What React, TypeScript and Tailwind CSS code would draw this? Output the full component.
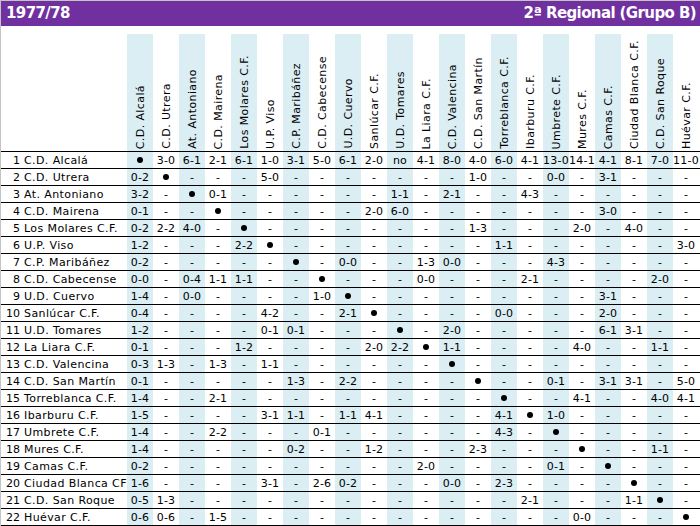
import clsx from 'clsx'

const teams = [
  'C.D. Alcalá',
  'C.D. Utrera',
  'At. Antoniano',
  'C.D. Mairena',
  'Los Molares C.F.',
  'U.P. Viso',
  'C.P. Maribáñez',
  'C.D. Cabecense',
  'U.D. Cuervo',
  'Sanlúcar C.F.',
  'U.D. Tomares',
  'La Liara C.F.',
  'C.D. Valencina',
  'C.D. San Martín',
  'Torreblanca C.F.',
  'Ibarburu C.F.',
  'Umbrete C.F.',
  'Mures C.F.',
  'Camas C.F.',
  'Ciudad Blanca CF',
  'C.D. San Roque',
  'Huévar C.F.',
]

// column headings spell out the full name of Ciudad Blanca
const headings = teams.map((t) => (t === 'Ciudad Blanca CF' ? 'Ciudad Blanca C.F.' : t))

// "x" marks the team against itself
const results = [
  'x 3-0 6-1 2-1 6-1 1-0 3-1 5-0 6-1 2-0 no 4-1 8-0 4-0 6-0 4-1 13-0 14-1 4-1 8-1 7-0 11-0',
  '0-2 x - - - 5-0 - - - - - - - 1-0 - - 0-0 - 3-1 - - -',
  '3-2 - x 0-1 - - - - - - 1-1 - 2-1 - - 4-3 - - - - - -',
  '0-1 - - x - - - - - 2-0 6-0 - - - - - - - 3-0 - - -',
  '0-2 2-2 4-0 - x - - - - - - - - 1-3 - - - 2-0 - 4-0 - -',
  '1-2 - - - 2-2 x - - - - - - - - 1-1 - - - - - - 3-0',
  '0-2 - - - - - x - 0-0 - - 1-3 0-0 - - - 4-3 - - - - -',
  '0-0 - 0-4 1-1 1-1 - - x - - - 0-0 - - - 2-1 - - - - 2-0 -',
  '1-4 - 0-0 - - - - 1-0 x - - - - - - - - - 3-1 - - -',
  '0-4 - - - - 4-2 - - 2-1 x - - - - 0-0 - - - 2-0 - - -',
  '1-2 - - - - 0-1 0-1 - - - x - 2-0 - - - - - 6-1 3-1 - -',
  '0-1 - - - 1-2 - - - - 2-0 2-2 x 1-1 - - - - 4-0 - - 1-1 -',
  '0-3 1-3 - 1-3 - 1-1 - - - - - - x - - - - - - - - -',
  '0-1 - - - - - 1-3 - 2-2 - - - - x - - 0-1 - 3-1 3-1 - 5-0',
  '1-4 - - 2-1 - - - - - - - - - - x - - 4-1 - - 4-0 4-1',
  '1-5 - - - - 3-1 1-1 - 1-1 4-1 - - - - 4-1 x 1-0 - - - - -',
  '1-4 - - 2-2 - - - 0-1 - - - - - - 4-3 - x - - - - -',
  '1-4 - - - - - 0-2 - - 1-2 - - - 2-3 - - - x - - 1-1 -',
  '0-2 - - - - - - - - - - 2-0 - - - - 0-1 - x - - -',
  '1-6 - - - - 3-1 - 2-6 0-2 - - - 0-0 - 2-3 - - - - x - -',
  '0-5 1-3 - - - - - - - - - - - - - 2-1 - - - 1-1 x -',
  '0-6 0-6 - 1-5 - - - - - - - - - - - - - 0-0 - - - x',
].map((r) => r.split(' '))

export default function App() {
  return (
    <div className="h-[526px] w-[700px] overflow-hidden border-l border-t border-[#c4c4c4] bg-white font-['DejaVu_Sans',Verdana,sans-serif] text-[11px] leading-[13px] text-black">
      <header className="flex h-[25px] items-center justify-between bg-[#7030a0] pl-[5px] pr-[4px] text-[15px] font-bold tracking-[-0.6px] text-white">
        <span>1977/78</span>
        <span>2ª Regional (Grupo B)</span>
      </header>

      <div className="mt-[8px]">
        <div className="flex h-[118px] border-b border-black">
          <div className="w-[126px] shrink-0" />
          {headings.map((h, i) => (
            <div
              key={h}
              className={clsx(
                'flex w-[26px] shrink-0 items-end justify-center pb-[2px]',
                i % 2 === 0 && 'bg-[#daeef3]',
              )}
            >
              <span className="rotate-180 whitespace-nowrap tracking-[0.4px] [writing-mode:vertical-rl]">
                {h}
              </span>
            </div>
          ))}
        </div>

        {teams.map((team, r) => (
          <div key={team} className="flex h-[17px] border-b border-black">
            <div className="flex w-[126px] shrink-0 items-center whitespace-nowrap">
              <span className="w-[19px] text-right">{r + 1}</span>
              <span className="ml-[4px] tracking-[0.4px]">{team}</span>
            </div>
            {results[r].map((score, c) => (
              <div
                key={c}
                className={clsx(
                  'flex w-[26px] shrink-0 items-center justify-center whitespace-nowrap tracking-[0.2px]',
                  c % 2 === 0 && 'bg-[#daeef3]',
                )}
              >
                {score === 'x' ? <span className="h-[6px] w-[6px] rounded-full bg-black" /> : score}
              </div>
            ))}
          </div>
        ))}
      </div>
    </div>
  )
}
